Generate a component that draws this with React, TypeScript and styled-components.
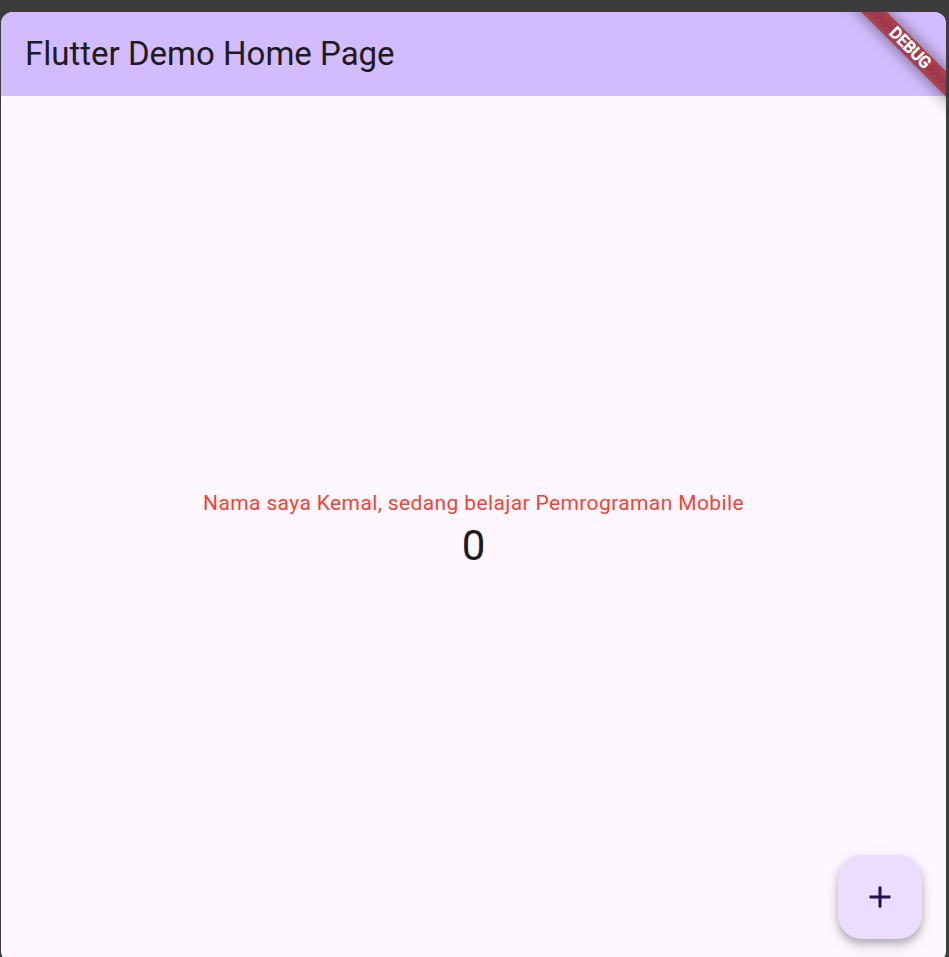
import React, { useState } from "react";
import styled, { createGlobalStyle } from "styled-components";

const GlobalStyle = createGlobalStyle`
  *, *::before, *::after { box-sizing: border-box; }
  body { margin: 0; background: #3c3c3c; font-family: Roboto, sans-serif; color: #1d1b20; }
`;

const Backdrop = styled.div`
  display: flex;
  height: 100vh;
  padding: 12px 3px 0 1px;
  overflow: hidden;
`;

const Window = styled.div`
  position: relative;
  display: flex;
  flex-direction: column;
  flex: 1;
  margin-bottom: -6px;
  overflow: hidden;
  border-radius: 12px;
  background: #fef7ff;
`;

const AppBar = styled.header`
  display: flex;
  align-items: center;
  height: 84px;
  padding: 0 24px;
  background: #d3bcfd;
`;

const Title = styled.h1`
  margin: 0;
  font-size: 33px;
  font-weight: 400;
  line-height: 42px;
`;

const Content = styled.main`
  display: flex;
  flex: 1;
  flex-direction: column;
  align-items: center;
  justify-content: center;
`;

const Message = styled.p`
  margin: 0;
  color: #f44336;
  font-size: 21px;
  line-height: 32px;
  letter-spacing: 0.018em;
`;

const Counter = styled.output`
  font-size: 42px;
  line-height: 54px;
`;

const DebugCorner = styled.div`
  position: absolute;
  top: 0;
  right: 0;
  width: 120px;
  height: 120px;
  overflow: hidden;
  pointer-events: none;
`;

const DebugRibbon = styled.div`
  position: absolute;
  top: 27px;
  right: -42px;
  width: 156px;
  height: 18px;
  transform: rotate(45deg);
  background: linear-gradient(#ab4252, #9f3748 50%, #ab4252);
  box-shadow: 0 0 16px rgba(0, 0, 0, 0.5);
  color: #fff;
  font-size: 16px;
  font-weight: 400;
  line-height: 18px;
  text-align: center;
  -webkit-text-stroke: 1px #fff;
`;

const AddButton = styled.button`
  position: absolute;
  right: 24px;
  bottom: 24px;
  display: grid;
  place-items: center;
  width: 84px;
  height: 84px;
  padding: 0;
  border: 0;
  border-radius: 24px;
  background: #eaddff;
  color: #260f50;
  cursor: pointer;
  box-shadow: 0 4px 6px rgba(0, 0, 0, 0.18), 0 8px 14px rgba(0, 0, 0, 0.12), 0 1px 16px rgba(0, 0, 0, 0.06);
`;

export default function App() {
  const [count, setCount] = useState(0);
  return (
    <Backdrop>
      <GlobalStyle />
      <Window>
        <AppBar>
          <Title>Flutter Demo Home Page</Title>
        </AppBar>
        <Content>
          <Message id="counter-label">Nama saya Kemal, sedang belajar Pemrograman Mobile</Message>
          <Counter aria-labelledby="counter-label">{count}</Counter>
        </Content>
        <AddButton type="button" aria-label="Increment" onClick={() => setCount(count + 1)}>
          <svg width="36" height="36" viewBox="0 0 24 24" fill="currentColor" aria-hidden="true">
            <path d="M19 13h-6v6h-2v-6H5v-2h6V5h2v6h6v2z" />
          </svg>
        </AddButton>
        <DebugCorner>
          <DebugRibbon>DEBUG</DebugRibbon>
        </DebugCorner>
      </Window>
    </Backdrop>
  );
}
